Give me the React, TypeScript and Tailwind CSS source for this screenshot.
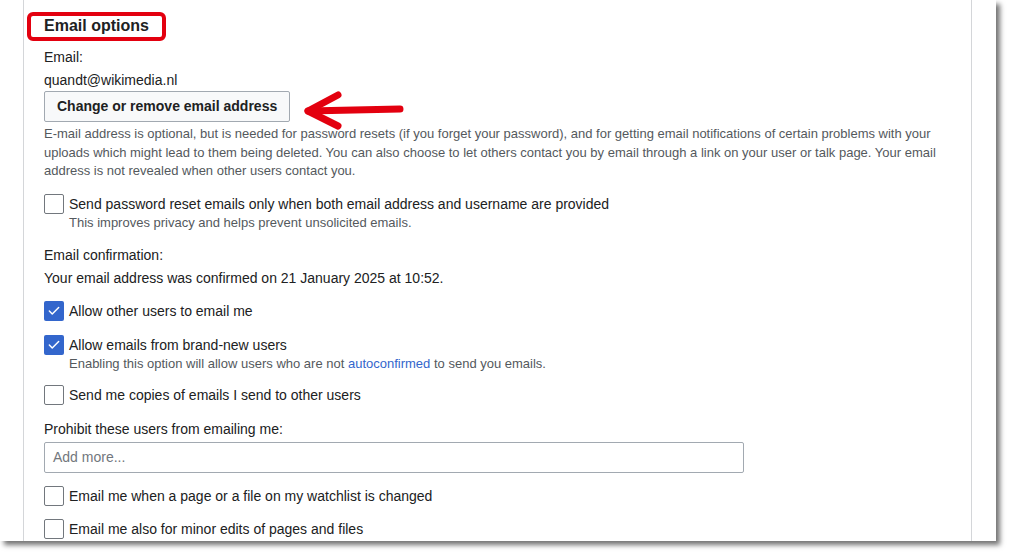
import { Check } from "lucide-react";

type BoxProps = { checked?: boolean };

function Box({ checked }: BoxProps) {
  return checked ? (
    <span className="flex h-5 w-5 shrink-0 items-center justify-center rounded-[2px] bg-[#3366cc]">
      <Check className="h-[14px] w-[14px] text-white" strokeWidth={2.5} />
    </span>
  ) : (
    <span className="h-5 w-5 shrink-0 rounded-[2px] border border-[#72777d] bg-white" />
  );
}

function CheckRow({
  label,
  checked,
  sub,
  className = "",
}: {
  label: string;
  checked?: boolean;
  sub?: React.ReactNode;
  className?: string;
}) {
  return (
    <div className={className}>
      <div className="flex items-center gap-[5px]">
        <Box checked={checked} />
        <span className="leading-5">{label}</span>
      </div>
      {sub && <p className="pl-[25px] text-[13px] leading-[18px] text-[#54595d]">{sub}</p>}
    </div>
  );
}

export default function App() {
  return (
    <div className="h-[556px] w-[1011px] overflow-hidden bg-white">
      {/* the pasted screenshot, with its drop shadow */}
      <div className="relative h-[541px] w-[996px] overflow-hidden bg-white shadow-[4px_4px_5px_rgba(0,0,0,0.55)]">
        <div
          className="ml-[23px] h-full w-[949px] border-x border-[#d4d6d9] pl-[20px] text-[14px] text-[#202122]"
          style={{ fontFamily: '"Liberation Sans", Arial, sans-serif' }}
        >
          <h2 className="pt-[15px] text-[16px] font-bold leading-[22px]">Email options</h2>

          <p className="mt-[10px] leading-5">Email:</p>
          <p className="mt-[3px] leading-5">quandt@wikimedia.nl</p>
          <button className="mt-px h-[31px] rounded-[2px] border border-[#a2a9b1] bg-[#f8f9fa] px-[12px] text-[14px] font-bold text-[#202122]">
            Change or remove email address
          </button>

          <p className="mt-[3px] w-[902px] text-[13px] leading-[18.5px] text-[#54595d]">
            E-mail address is optional, but is needed for password resets (if you forget your password), and for
            getting email notifications of certain problems with your uploads which might lead to them being
            deleted. You can also choose to let others contact you by email through a link on your user or talk
            page. Your email address is not revealed when other users contact you.
          </p>

          <CheckRow
            className="mt-[13px]"
            label="Send password reset emails only when both email address and username are provided"
            sub="This improves privacy and helps prevent unsolicited emails."
          />

          <p className="mt-[13px] leading-5">Email confirmation:</p>
          <p className="mt-[3px] leading-5">Your email address was confirmed on 21 January 2025 at 10:52.</p>

          <CheckRow className="mt-[13px]" checked label="Allow other users to email me" />
          <CheckRow
            className="mt-[14px]"
            checked
            label="Allow emails from brand-new users"
            sub={
              <>
                Enabling this option will allow users who are not{" "}
                <a href="#" className="text-[#3366cc]">
                  autoconfirmed
                </a>{" "}
                to send you emails.
              </>
            }
          />
          <CheckRow className="mt-[12px]" label="Send me copies of emails I send to other users" />

          <p className="mt-[14px] leading-5">Prohibit these users from emailing me:</p>
          <div className="mt-[3px] flex h-[31px] w-[700px] items-center rounded-[2px] border border-[#a2a9b1] px-[8px] text-[#72777d]">
            Add more...
          </div>

          <CheckRow className="mt-[13px]" label="Email me when a page or a file on my watchlist is changed" />
          <CheckRow className="mt-[13px]" label="Email me also for minor edits of pages and files" />
        </div>

        {/* red annotations */}
        <div className="absolute left-[27px] top-[12px] h-[29px] w-[139px] rounded-[6px] border-4 border-[#e3000f]" />
        <svg className="absolute left-[298px] top-[88px]" width="110" height="46" viewBox="0 0 110 46">
          <path d="M10 23 L102 21" stroke="#e3000f" strokeWidth="7" strokeLinecap="round" fill="none" />
          <path
            d="M40 7 L10 23 L40 38"
            stroke="#e3000f"
            strokeWidth="7"
            strokeLinecap="round"
            strokeLinejoin="round"
            fill="none"
          />
        </svg>
      </div>
    </div>
  );
}
